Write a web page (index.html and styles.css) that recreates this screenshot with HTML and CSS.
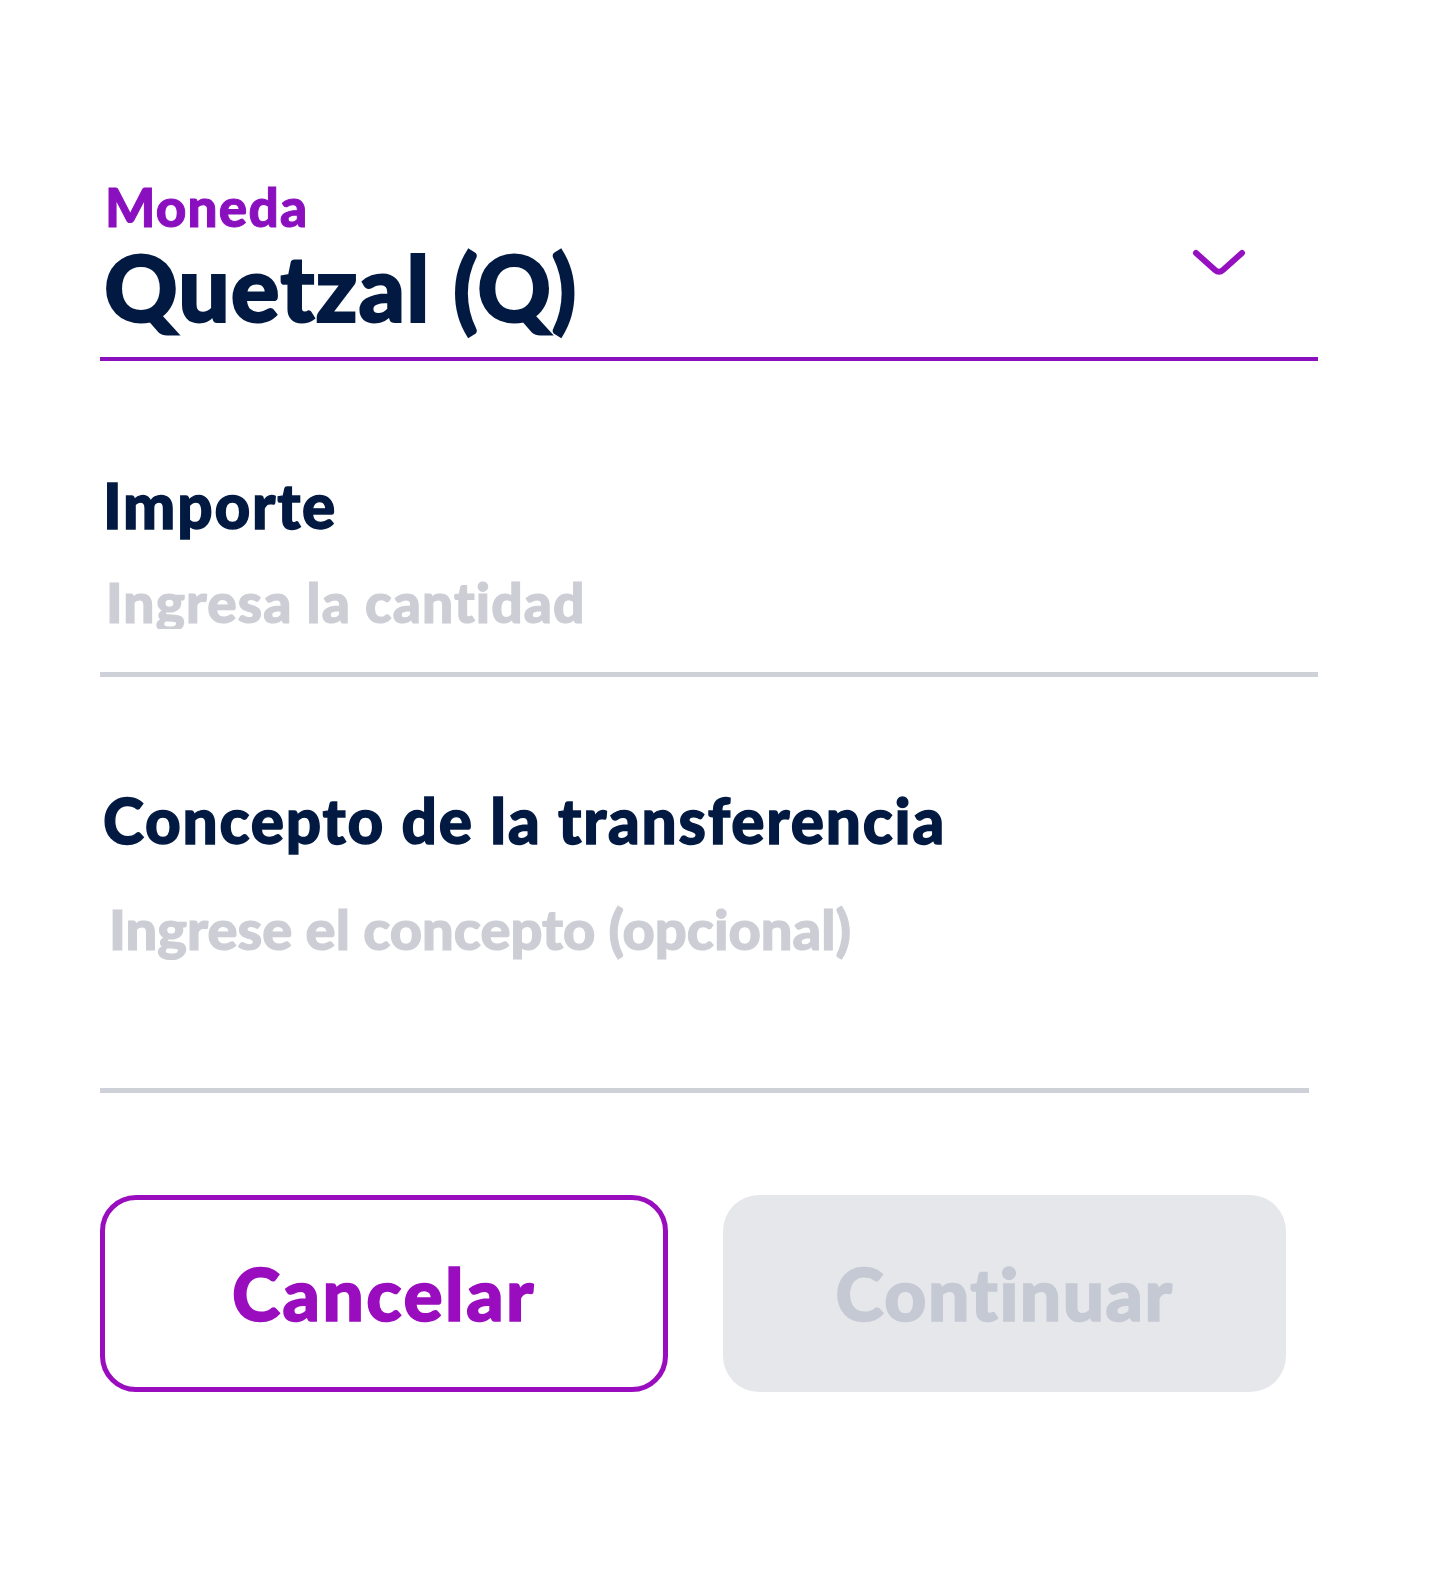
FILE: index.html
```html
<!DOCTYPE html>
<html lang="es">
<head>
    <meta charset="UTF-8">
    <meta name="viewport" content="width=device-width, initial-scale=1.0">
    <title>Transferencia</title>
    <link rel="stylesheet" href="styles.css">
</head>
<body>
    <form class="form" name="transfer">
        <div class="field select">
            <label class="select-label" for="currency">Moneda</label>
            <div class="select-row">
                <div class="select-value" id="currency">Quetzal (Q)</div>
                <svg class="chevron" width="56" height="30" viewBox="0 0 56 30">
                    <path d="M5 5 L24 22 Q28 25.5 32 22 L51 5" fill="none" stroke="#9410c0" stroke-width="6" stroke-linecap="round" stroke-linejoin="round"/>
                </svg>
            </div>
        </div>

        <div class="field amount">
            <label class="field-label" for="amount">Importe</label>
            <input class="field-input" id="amount" type="text" placeholder="Ingresa la cantidad">
        </div>

        <div class="field concept">
            <label class="field-label" for="concept">Concepto de la transferencia</label>
            <textarea class="field-area" id="concept" placeholder="Ingrese el concepto (opcional)"></textarea>
        </div>

        <div class="actions">
            <button type="button" class="btn btn-cancel">Cancelar</button>
            <button type="button" class="btn btn-continue" disabled>Continuar</button>
        </div>
    </form>
</body>
</html>
```

FILE: styles.css
```css
*{
    margin: 0;
    padding: 0;
    box-sizing: border-box;
}
body{
    background: #fff;
    font-family: Lato, "Noto Sans", sans-serif;
    font-weight: 700;
    color: #021a42;
}
.form{
    width: 1318px;
    padding: 180px 0 0 100px;
}

.field{
    display: flex;
    flex-direction: column;
}

/* moneda */
.select{
    width: 1218px;
    border-bottom: 4px solid #8a10bd;
    padding-bottom: 25px;
}
.select-label{
    font-size: 53px;
    line-height: 1;
    font-weight: 900;
    letter-spacing: 1.2px;
    color: #8a0fbf;
    padding-left: 5px;
    -webkit-text-stroke: 1px #8a0fbf;
}
.select-row{
    display: flex;
    justify-content: space-between;
    align-items: flex-start;
    margin-top: 8px;
}
.select-value{
    font-size: 91px;
    line-height: 1;
    font-weight: 900;
    letter-spacing: 1px;
    padding-left: 4px;
    -webkit-text-stroke: 2px #021a42;
}
.chevron{
    margin-top: 7px;
    margin-right: 71px;
}

/* importe */
.amount{
    width: 1218px;
    margin-top: 113px;
    border-bottom: 5px solid #cfd1d8;
    padding-bottom: 43px;
}
.field-label{
    font-size: 62px;
    line-height: 1;
    font-weight: 900;
    letter-spacing: 1.8px;
    padding-left: 3px;
    -webkit-text-stroke: 1.4px #021a42;
}
.field-input,
.field-area{
    border: none;
    outline: none;
    background: transparent;
    font-family: Lato, "Noto Sans", sans-serif;
    font-weight: 900;
    color: #021a42;
    line-height: 1;
    padding: 0 0 0 6px;
}
.field-input{
    font-size: 55px;
    height: 55px;
    margin-top: 38px;
    letter-spacing: 1.1px;
}
.field-input::placeholder,
.field-area::placeholder{
    color: #cdced5;
    opacity: 1;
    -webkit-text-stroke: 1.2px #cdced5;
}

/* concepto */
.concept{
    width: 1209px;
    margin-top: 112px;
    border-bottom: 5px solid #cfd1d8;
}
.field-area{
    font-size: 56px;
    height: 187px;
    margin-top: 50px;
    letter-spacing: 0;
    resize: none;
    padding-left: 9px;
}

/* botones */
.actions{
    display: flex;
    gap: 55px;
    margin-top: 102px;
}
.btn{
    height: 197px;
    border-radius: 36px;
    font-family: Lato, "Noto Sans", sans-serif;
    font-weight: 900;
    font-size: 73px;
    line-height: 1;
    letter-spacing: 1.5px;
    display: flex;
    align-items: center;
    justify-content: center;
}
.btn-cancel{
    width: 568px;
    background: #fff;
    border: 5px solid #9a0dbf;
    color: #9a0dbf;
    letter-spacing: 2.5px;
    -webkit-text-stroke: 1.6px #9a0dbf;
}
.btn-continue{
    width: 563px;
    background: #e6e7eb;
    border: none;
    color: #c5c9d4;
    -webkit-text-stroke: 1.6px #c5c9d4;
}
```
